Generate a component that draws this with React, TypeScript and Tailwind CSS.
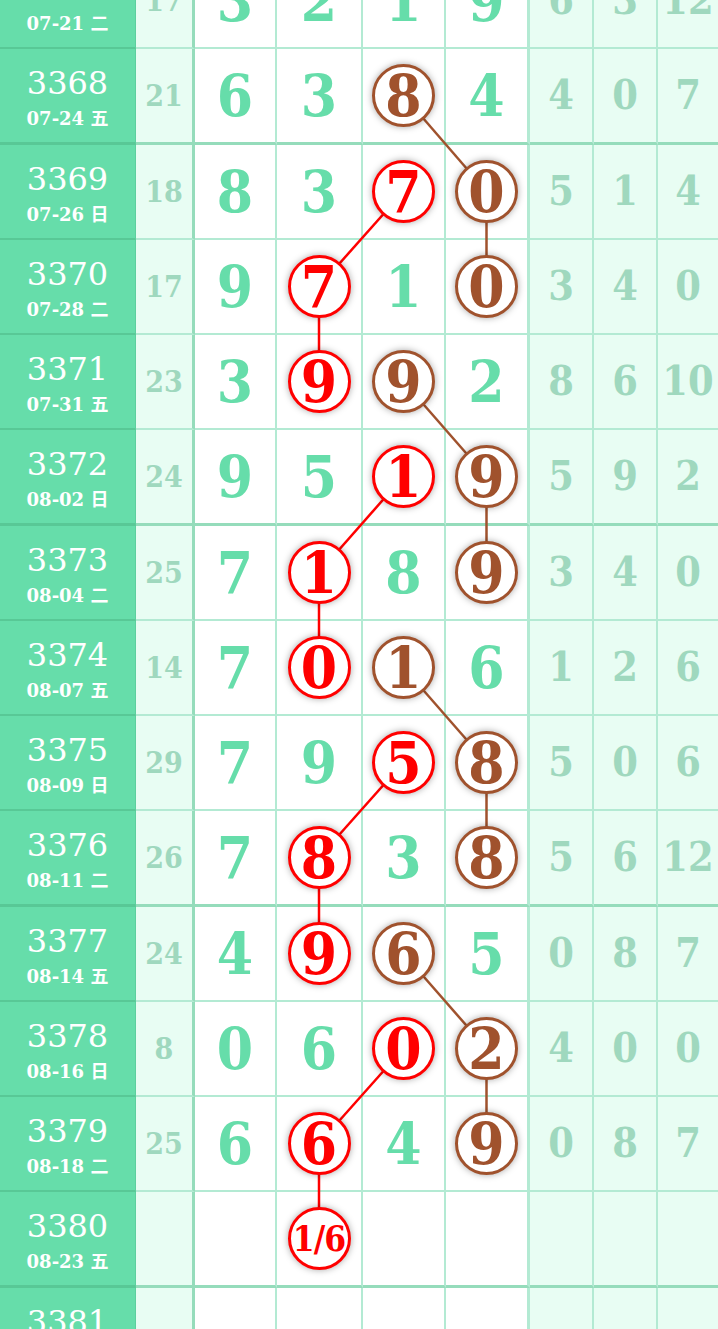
import React from "react";

type Row = {
  no: string;
  date: string;
  sum: string;
  d: string[];
  r: string[];
  thick: boolean;
  red?: number;
  brown?: number;
};

const rows: Row[] = [
  { no: "3367", date: "07-21 二", sum: "17", d: ["3", "2", "1", "9"], r: ["6", "3", "12"], thick: false },
  { no: "3368", date: "07-24 五", sum: "21", d: ["6", "3", "8", "4"], r: ["4", "0", "7"], thick: true, brown: 2 },
  { no: "3369", date: "07-26 日", sum: "18", d: ["8", "3", "7", "0"], r: ["5", "1", "4"], thick: false, red: 2, brown: 3 },
  { no: "3370", date: "07-28 二", sum: "17", d: ["9", "7", "1", "0"], r: ["3", "4", "0"], thick: false, red: 1, brown: 3 },
  { no: "3371", date: "07-31 五", sum: "23", d: ["3", "9", "9", "2"], r: ["8", "6", "10"], thick: false, red: 1, brown: 2 },
  { no: "3372", date: "08-02 日", sum: "24", d: ["9", "5", "1", "9"], r: ["5", "9", "2"], thick: true, red: 2, brown: 3 },
  { no: "3373", date: "08-04 二", sum: "25", d: ["7", "1", "8", "9"], r: ["3", "4", "0"], thick: false, red: 1, brown: 3 },
  { no: "3374", date: "08-07 五", sum: "14", d: ["7", "0", "1", "6"], r: ["1", "2", "6"], thick: false, red: 1, brown: 2 },
  { no: "3375", date: "08-09 日", sum: "29", d: ["7", "9", "5", "8"], r: ["5", "0", "6"], thick: false, red: 2, brown: 3 },
  { no: "3376", date: "08-11 二", sum: "26", d: ["7", "8", "3", "8"], r: ["5", "6", "12"], thick: true, red: 1, brown: 3 },
  { no: "3377", date: "08-14 五", sum: "24", d: ["4", "9", "6", "5"], r: ["0", "8", "7"], thick: false, red: 1, brown: 2 },
  { no: "3378", date: "08-16 日", sum: "8", d: ["0", "6", "0", "2"], r: ["4", "0", "0"], thick: false, red: 2, brown: 3 },
  { no: "3379", date: "08-18 二", sum: "25", d: ["6", "6", "4", "9"], r: ["0", "8", "7"], thick: false, red: 1, brown: 3 },
  { no: "3380", date: "08-23 五", sum: "", d: ["", "1/6", "", ""], r: ["", "", ""], thick: true, red: 1 },
  { no: "3381", date: "08-25 日", sum: "", d: ["", "", "", ""], r: ["", "", ""], thick: false },
];

const colCenters = [235, 319, 403.5, 486.5];

const redLines: [number, number, number, number][] = [
  [2, 2, 3, 1],
  [3, 1, 4, 1],
  [5, 2, 6, 1],
  [6, 1, 7, 1],
  [8, 2, 9, 1],
  [9, 1, 10, 1],
  [11, 2, 12, 1],
  [12, 1, 13, 1],
];
const brownLines: [number, number, number, number][] = [
  [1, 2, 2, 3],
  [2, 3, 3, 3],
  [4, 2, 5, 3],
  [5, 3, 6, 3],
  [7, 2, 8, 3],
  [8, 3, 9, 3],
  [10, 2, 11, 3],
  [11, 3, 12, 3],
];

const heights = rows.map((r) => (r.thick ? 96 : 95));
const tops: number[] = [];
{
  let t = 0;
  for (const h of heights) {
    tops.push(t);
    t += h;
  }
}
const totalH = heights.reduce((a, b) => a + b, 0);
const centerY = (i: number) => tops[i] + (heights[i] - (rows[i].thick ? 3 : 2)) / 2;

const serif = { fontFamily: '"DejaVu Serif", "Noto Sans CJK SC", serif' };
const cond = { fontFamily: '"DejaVu Serif Condensed", "DejaVu Serif", serif' };

function Circle({ text, kind }: { text: string; kind: "red" | "brown" }) {
  const small = text.length > 1;
  return (
    <div
      className={
        "relative z-10 flex h-[63px] w-[63px] items-center justify-center rounded-full border-[3px] bg-white shadow-[0_0_7px_rgba(0,0,0,0.35)] " +
        (kind === "red" ? "border-[#ff0000] text-[#ff0000]" : "border-[#a0522d] text-[#a0522d]")
      }
    >
      <span
        style={cond}
        className={
          small
            ? "text-[35px] font-bold leading-none tracking-[-1px] [font-stretch:semi-condensed]"
            : "text-[58px] font-bold leading-none [font-stretch:semi-condensed]"
        }
      >
        {text}
      </span>
    </div>
  );
}

export default function App() {
  const digitW = ["w-[82px] border-r-2", "w-[86px] border-r-2", "w-[83px] border-r-2", "w-[84px] border-r-[3px] border-r-[#95dcbb]"];
  const rightW = ["w-[64px] border-r-2", "w-[64px] border-r-2", "w-[60px]"];
  return (
    <div className="h-[1329px] w-[718px] overflow-hidden bg-white" style={serif}>
      <div className="relative -mt-[46px]">
        <svg
          className="pointer-events-none absolute left-0 top-0 z-0"
          width={718}
          height={totalH}
          viewBox={`0 0 718 ${totalH}`}
        >
          {redLines.map(([r1, c1, r2, c2], i) => (
            <line
              key={"r" + i}
              x1={colCenters[c1]}
              y1={centerY(r1)}
              x2={colCenters[c2]}
              y2={centerY(r2)}
              stroke="#ff0000"
              strokeWidth={2.5}
            />
          ))}
          {brownLines.map(([r1, c1, r2, c2], i) => (
            <line
              key={"b" + i}
              x1={colCenters[c1]}
              y1={centerY(r1)}
              x2={colCenters[c2]}
              y2={centerY(r2)}
              stroke="#a0522d"
              strokeWidth={2.5}
            />
          ))}
        </svg>
        {rows.map((row) => {
          const bb = row.thick ? "border-b-[3px] border-b-[#95dcbb]" : "border-b-2 border-b-[#b3ead3]";
          const gb = row.thick ? "border-b-[3px]" : "border-b-2";
          return (
            <div key={row.no} className={"flex " + (row.thick ? "h-[96px]" : "h-[95px]")}>
              <div
                className={
                  "flex w-[136px] flex-col items-center justify-center border-r border-r-[#5ccf9e] border-b-[#58c896] bg-[#66ddaa] pt-[3px] text-white " +
                  gb
                }
              >
                <span className="text-[32px] leading-none">{row.no}</span>
                <span className="mt-[11px] text-[18px] font-bold leading-none">{row.date}</span>
              </div>
              <div
                style={cond}
                className={
                  "flex w-[59px] items-center justify-center border-r-[3px] border-r-[#95dcbb] bg-[#e8fdf3] text-[30px] font-bold leading-none text-[#9fd8be] [font-stretch:semi-condensed] " +
                  bb
                }
              >
                {row.sum}
              </div>
              {row.d.map((v, ci) => (
                <div
                  key={ci}
                  className={
                    "flex items-center justify-center border-r-[#b3ead3] bg-white " + digitW[ci] + " " + bb
                  }
                >
                  {row.red === ci ? (
                    <Circle text={v} kind="red" />
                  ) : row.brown === ci ? (
                    <Circle text={v} kind="brown" />
                  ) : (
                    <span
                      style={cond}
                      className="text-[58px] font-bold leading-none text-[#66ddaa] [font-stretch:semi-condensed]"
                    >
                      {v}
                    </span>
                  )}
                </div>
              ))}
              {row.r.map((v, ci) => (
                <div
                  key={"r" + ci}
                  style={cond}
                  className={
                    "flex items-center justify-center border-r-[#b3ead3] bg-[#e8fdf3] text-[41px] font-bold leading-none text-[#9fd8be] [font-stretch:semi-condensed] " +
                    rightW[ci] +
                    " " +
                    bb
                  }
                >
                  {v}
                </div>
              ))}
            </div>
          );
        })}
      </div>
    </div>
  );
}
